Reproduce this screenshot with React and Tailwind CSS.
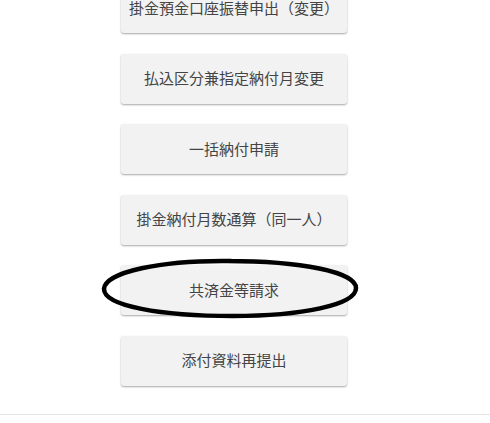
import React from "react";

const items = [
  "掛金預金口座振替申出（変更）",
  "払込区分兼指定納付月変更",
  "一括納付申請",
  "掛金納付月数通算（同一人）",
  "共済金等請求",
  "添付資料再提出",
];

const App = () => {
  return (
    <div
      className="relative w-[490px] h-[423px] overflow-hidden bg-white"
      style={{ fontFamily: '"Noto Sans CJK JP", "Noto Sans", sans-serif' }}
    >
      <div className="flex flex-col gap-[20.5px] ml-[121px] mt-[-17px] w-[226px]">
        {items.map((label) => (
          <button
            key={label}
            className="relative h-[50px] w-full rounded-[3px] bg-[#f2f2f2] text-[15px] text-[#444] shadow-[0_1px_2px_rgba(0,0,0,0.35)] flex items-center justify-center"
          >
            {label}
            {label === "共済金等請求" && (
              <svg
                className="absolute left-[-20px] top-[-7px] pointer-events-none"
                width="258"
                height="62"
                viewBox="0 0 258 62"
              >
                <path
                  d="M130 3 C 60 2, 4 14, 3 31 C 3 48, 60 58, 132 58 C 200 58, 255 47, 255 30 C 255 14, 200 3, 126 3"
                  fill="none"
                  stroke="#000"
                  strokeWidth="4.5"
                  strokeLinecap="round"
                />
              </svg>
            )}
          </button>
        ))}
      </div>
      <div className="absolute left-0 right-0 top-[414px] border-t border-[#e5e5e5]" />
    </div>
  );
};

export default App;
